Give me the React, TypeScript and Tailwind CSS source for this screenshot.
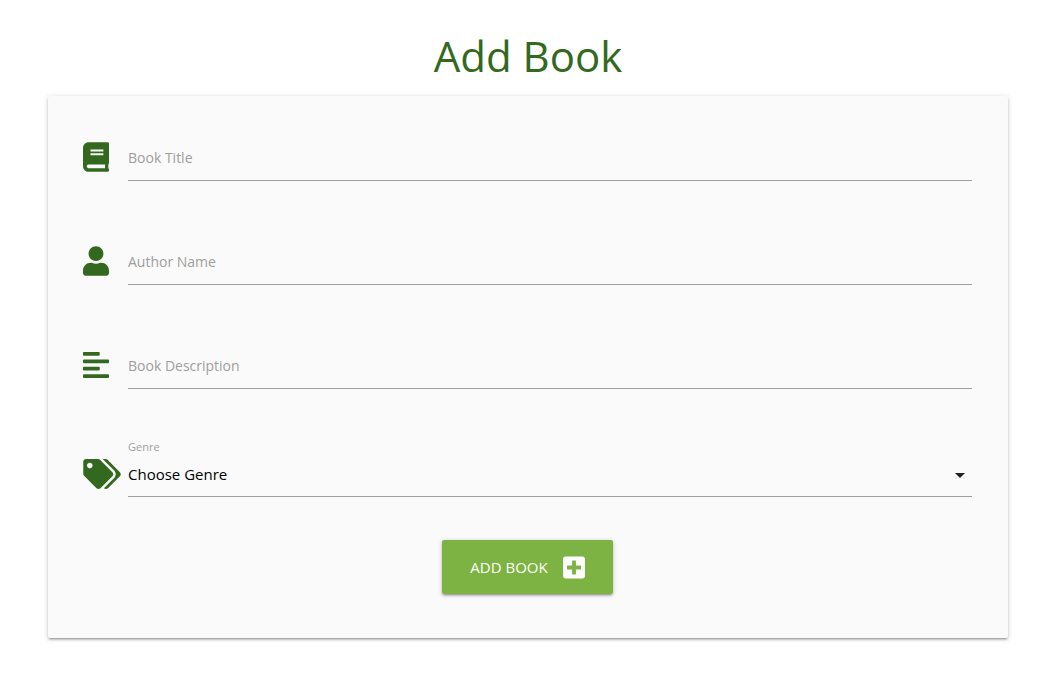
import { useState } from "react";
import type { ReactNode } from "react";
import { FaAlignLeft, FaBook, FaPlusSquare, FaTags, FaUser } from "react-icons/fa";

type TextFieldProps = {
  id: string;
  label: string;
  icon: ReactNode;
};

function TextField({ id, label, icon }: TextFieldProps) {
  return (
    <div className="flex items-center">
      <div className="w-[45px] shrink-0 pb-[2px] text-[#33691e]" aria-hidden="true">
        {icon}
      </div>
      <div className="grid min-w-0 flex-1 items-center">
        <input
          id={id}
          type="text"
          placeholder=" "
          className="peer col-start-1 row-start-1 h-[46px] w-full min-w-0 border-b border-[#9e9e9e] bg-transparent text-[15px] text-black outline-none focus:border-[#33691e]"
        />
        <label
          htmlFor={id}
          className="pointer-events-none col-start-1 row-start-1 origin-left text-[14px] leading-[20px] text-[#9e9e9e] transition-all peer-focus:-translate-y-7 peer-focus:text-[11px] peer-focus:text-[#33691e] peer-not-placeholder-shown:-translate-y-7 peer-not-placeholder-shown:text-[11px]"
        >
          {label}
        </label>
      </div>
    </div>
  );
}

const genres = ["Fantasy", "Mystery", "Romance", "Science Fiction", "Thriller"];

export default function App() {
  const [genre, setGenre] = useState("");

  return (
    <main className="min-h-screen bg-white pt-7 pr-14 pb-12 pl-12 font-['Open_Sans','Noto_Sans',sans-serif]">
      <h1 className="text-center text-[42px] leading-[56px] text-[#33691e]">Add Book</h1>

      <form
        onSubmit={(event) => event.preventDefault()}
        className="mt-3 rounded-[2px] bg-[#fafafa] pt-[39px] pr-9 pb-11 pl-[35px] shadow-[0_2px_2px_0_rgba(0,0,0,0.14),0_3px_1px_-2px_rgba(0,0,0,0.12),0_1px_5px_0_rgba(0,0,0,0.2)]"
      >
        <div className="flex flex-col gap-[58px]">
          <TextField id="title" label="Book Title" icon={<FaBook className="h-[30px] w-[26px]" />} />
          <TextField id="author" label="Author Name" icon={<FaUser className="h-[30px] w-[26px]" />} />
          <TextField
            id="description"
            label="Book Description"
            icon={<FaAlignLeft className="h-[30px] w-[26px]" />}
          />
        </div>

        <div className="mt-[52px] grid grid-cols-[45px_1fr] items-center">
          <label htmlFor="genre" className="col-start-2 text-[11px] leading-[12px] text-[#9e9e9e]">
            Genre
          </label>
          <div className="col-start-1 pb-[2px] text-[#33691e]" aria-hidden="true">
            <FaTags className="h-[30px] w-[38px]" />
          </div>
          <div className="grid items-center">
            <select
              id="genre"
              value={genre}
              onChange={(event) => setGenre(event.target.value)}
              className="col-start-1 row-start-1 h-[44px] w-full cursor-pointer appearance-none border-b border-[#9e9e9e] bg-transparent text-[15px] text-black outline-none"
            >
              <option value="" disabled>
                Choose Genre
              </option>
              {genres.map((name) => (
                <option key={name}>{name}</option>
              ))}
            </select>
            <svg
              viewBox="0 0 24 24"
              aria-hidden="true"
              className="pointer-events-none col-start-1 row-start-1 size-6 justify-self-end fill-black/87"
            >
              <path d="M7 10l5 5 5-5z" />
            </svg>
          </div>
        </div>

        <div className="mt-[43px] flex justify-center">
          <button
            type="submit"
            className="flex h-[54px] cursor-pointer items-center gap-[15px] rounded-[2px] bg-[#7cb342] px-7 text-[15px] text-white uppercase shadow-[0_2px_2px_0_rgba(0,0,0,0.14),0_3px_1px_-2px_rgba(0,0,0,0.12),0_1px_5px_0_rgba(0,0,0,0.2)]"
          >
            Add Book
            <FaPlusSquare className="h-[25px] w-[22px]" aria-hidden="true" />
          </button>
        </div>
      </form>
    </main>
  );
}
